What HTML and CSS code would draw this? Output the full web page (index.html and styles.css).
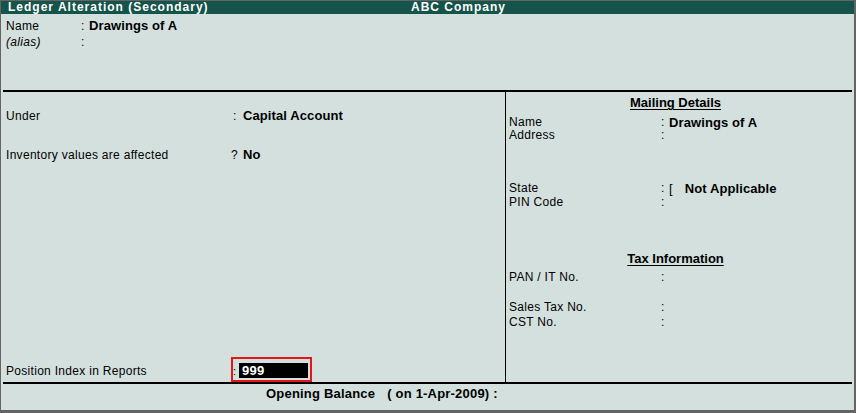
FILE: index.html
```html
<!DOCTYPE html>
<html>
<head>
<meta charset="utf-8">
<title>Ledger Alteration (Secondary)</title>
<link rel="stylesheet" href="styles.css">
</head>
<body>
<div class="frame">
  <div class="titlebar">
    <span class="title-left">Ledger Alteration (Secondary)</span>
    <span class="title-center">ABC Company</span>
  </div>
  <div class="header">
    <div class="hrow"><span class="hlabel">Name</span><span class="hcolon">:</span><span class="val">Drawings of A</span></div>
    <div class="hrow"><span class="hlabel alias">(alias)</span><span class="hcolon">:</span></div>
  </div>
  <div class="rule"></div>
  <div class="main">
    <div class="left">
      <div class="lrow under"><span class="llabel">Under</span><span class="lsep">:</span><span class="val">Capital Account</span></div>
      <div class="lrow inv"><span class="llabel">Inventory values are affected</span><span class="lsep q">?</span><span class="val">No</span></div>
      <div class="lrow pos">
        <span class="llabel poslabel">Position Index in Reports</span>
        <span class="focus"><span class="fcolon">:</span><span class="field">999</span></span>
      </div>
    </div>
    <div class="right">
      <div class="rhead mail">Mailing Details</div>
      <div class="rrow r-name"><span class="rlabel">Name</span><span class="rcolon">:</span><span class="val">Drawings of A</span></div>
      <div class="rrow r-addr"><span class="rlabel">Address</span><span class="rcolon">:</span></div>
      <div class="rrow r-state"><span class="rlabel">State</span><span class="rcolon">:</span><span class="val"><span class="bracket">[</span><span class="gap"></span>Not Applicable</span></div>
      <div class="rrow r-pin"><span class="rlabel">PIN Code</span><span class="rcolon">:</span></div>
      <div class="rhead tax">Tax Information</div>
      <div class="rrow r-pan"><span class="rlabel">PAN / IT No.</span><span class="rcolon">:</span></div>
      <div class="rrow r-sales"><span class="rlabel">Sales Tax No.</span><span class="rcolon">:</span></div>
      <div class="rrow r-cst"><span class="rlabel">CST No.</span><span class="rcolon">:</span></div>
    </div>
  </div>
  <div class="rule"></div>
  <div class="footer"><span class="ob">Opening Balance</span><span class="obdate">( on 1-Apr-2009) :</span></div>
</div>
</body>
</html>
```

FILE: styles.css
```css
* { box-sizing: border-box; }

html, body {
  margin: 0;
  padding: 0;
  background: #d4e0de;
}

body {
  font-family: "Liberation Sans", Arial, sans-serif;
  font-size: 12px;
  color: #000;
}

.frame {
  width: 856px;
  height: 413px;
  border-style: solid;
  border-color: #646464;
  border-width: 1px 2px 3px 1px;
  background: #d4e0de;
  display: flex;
  flex-direction: column;
  overflow: hidden;
}

.titlebar {
  height: 13px;
  background: #14544a;
  color: #fff;
  font-weight: bold;
  font-size: 12px;
  line-height: 13px;
  letter-spacing: 1px;
  display: flex;
  white-space: nowrap;
}

.title-left {
  width: 410px;
  padding-left: 7px;
}

.header {
  height: 76px;
  padding-top: 4px;
}

.hrow {
  display: flex;
  height: 16px;
  line-height: 16px;
  letter-spacing: 0.3px;
}

.hlabel {
  width: 80px;
  padding-left: 5px;
}

.alias { font-style: italic; }

.hcolon { width: 8px; }

.val {
  font-weight: bold;
  font-size: 13px;
  letter-spacing: 0.1px;
  white-space: nowrap;
}

.rule {
  height: 2px;
  background: #000;
  margin: 0 2px;
}

.main {
  height: 290px;
  display: flex;
}

.left {
  width: 505px;
  border-right: 1px solid #000;
  padding-left: 5px;
  display: flex;
  flex-direction: column;
}

.lrow {
  display: flex;
  line-height: 14px;
  letter-spacing: 0.3px;
}

.under { margin-top: 17px; }
.inv { margin-top: 25px; }

.llabel { width: 225px; }

.lsep { width: 12px; padding-left: 2px; }
.lsep.q { padding-left: 0; }

.pos {
  margin-top: auto;
  align-items: flex-end;
}

.poslabel { margin-bottom: 4px; }

.focus {
  display: flex;
  align-items: flex-end;
  border: 2px solid #e8141c;
  padding: 4px 2px 2px 0;
  height: 25px;
}

.fcolon {
  width: 6px;
  line-height: 13px;
  font-size: 11px;
}

.field {
  width: 69px;
  height: 15px;
  background: #000;
  color: #fff;
  font-weight: bold;
  font-size: 13px;
  line-height: 15px;
  padding-left: 3px;
  letter-spacing: 0.3px;
}

.right {
  flex: 1;
  padding-left: 3px;
  padding-top: 4px;
  display: flex;
  flex-direction: column;
}

.rhead {
  text-align: center;
  font-weight: bold;
  font-size: 13px;
  line-height: 13px;
  padding-right: 12px;
  text-decoration: underline;
  text-underline-offset: 2px;
}

.rrow {
  display: flex;
  line-height: 13px;
  letter-spacing: 0.3px;
}

.rlabel { width: 152px; }
.rcolon { width: 8px; }

.bracket { font-weight: normal; }
.gap { display: inline-block; width: 12px; }

.r-name { margin-top: 7px; }
.r-addr { margin-top: 0; }
.r-state { margin-top: 40px; }
.r-pin { margin-top: 1px; }
.tax { margin-top: 43px; }
.r-pan { margin-top: 6px; }
.r-sales { margin-top: 17px; }
.r-cst { margin-top: 2px; }

.footer {
  flex: 1;
  padding-left: 265px;
  padding-top: 3px;
  font-weight: bold;
  font-size: 13px;
  line-height: 14px;
  letter-spacing: 0.2px;
  white-space: pre;
}

.obdate { margin-left: 12px; }
```
